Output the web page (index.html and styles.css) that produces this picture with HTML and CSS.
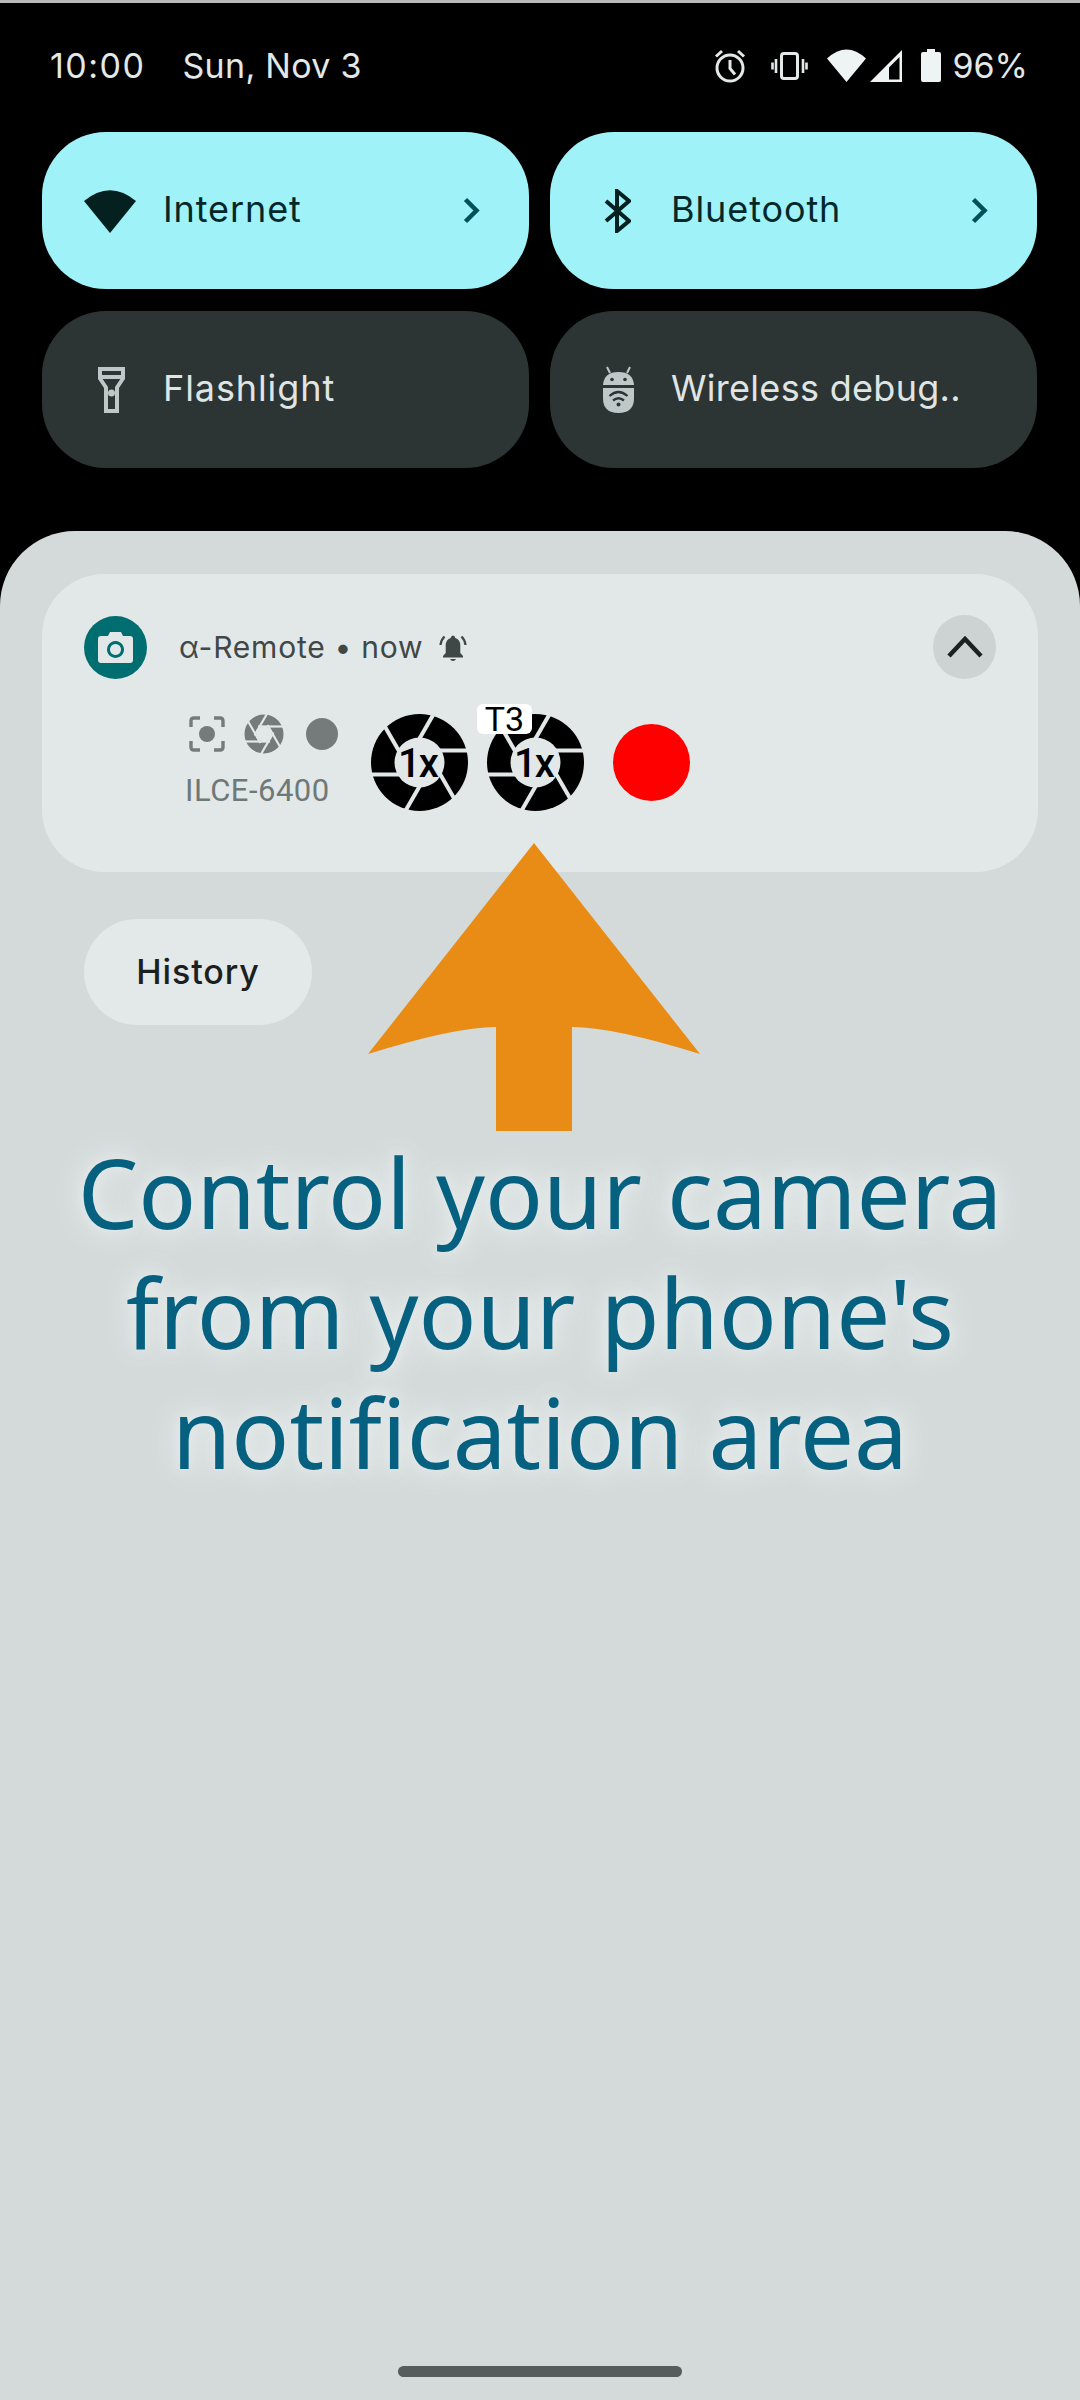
FILE: index.html
```html
<!DOCTYPE html>
<html lang="en">
<head>
  <meta charset="UTF-8" />
  <meta name="viewport" content="width=device-width, initial-scale=1.0"/>
  <title>Notification shade</title>
  <link rel="stylesheet" href="styles.css">
</head>
<body>
  <!-- Status bar -->
  <div class="statusbar">
    <span class="clock">10:00</span>
    <span class="date">Sun, Nov 3</span>
    <svg class="ic-alarm" viewBox="0 0 32 34">
      <circle cx="16" cy="19" r="13" fill="none" stroke="#e3e8e8" stroke-width="3"/>
      <path d="M16 11v8.500l5 6M2 7.500 8 2M30 7.500 24 2" fill="none" stroke="#e3e8e8" stroke-width="3"/>
    </svg>
    <svg class="ic-vibrate" viewBox="0 0 37 28">
      <rect x="10.500" y="1.500" width="16" height="25" rx="2.500" fill="none" stroke="#e3e8e8" stroke-width="3"/>
      <path d="M5 7v14M1.500 10.500v7M32 7v14M35.500 10.500v7" fill="none" stroke="#e3e8e8" stroke-width="2.600"/>
    </svg>
    <svg class="ic-wifi" viewBox="0 0 39 33">
      <path d="M19.500 33 0 9.500Q19.500-8.500 39 9.500Z" fill="#eef3f3"/>
    </svg>
    <svg class="ic-signal" viewBox="0 0 32 32">
      <path fill-rule="evenodd" d="M0 32 32 0V32ZM19 29.500h10.500V7L19 17.500Z" fill="#eef3f3"/>
    </svg>
    <svg class="ic-battery" viewBox="0 0 20 33">
      <path d="M6 0h8v3h4q2 0 2 2v26q0 2-2 2H2q-2 0-2-2V5q0-2 2-2h4Z" fill="#eef3f3"/>
    </svg>
    <span class="battery-text">96%</span>
  </div>

  <!-- Quick tiles -->
  <div class="tiles">
    <div class="tile tile-on">
      <svg class="tile-ic ic-internet" viewBox="0 0 52 45">
        <path d="M26 45 0 13Q26-8.500 52 13Z" fill="#04201f"/>
      </svg>
      <span class="tile-label">Internet</span>
      <svg class="tile-arrow" viewBox="0 0 17 27">
        <path d="M2.500 2.500 13.500 13.500 2.500 24.500" fill="none" stroke="#00505a" stroke-width="4.500"/>
      </svg>
    </div>
    <div class="tile tile-on">
      <svg class="tile-ic ic-bluetooth" viewBox="0 0 27 44">
        <path d="M2 12 25 32 13 42V2L25 12 2 32" fill="none" stroke="#04201f" stroke-width="4"/>
      </svg>
      <span class="tile-label">Bluetooth</span>
      <svg class="tile-arrow" viewBox="0 0 17 27">
        <path d="M2.500 2.500 13.500 13.500 2.500 24.500" fill="none" stroke="#00505a" stroke-width="4.500"/>
      </svg>
    </div>
    <div class="tile">
      <svg class="tile-ic ic-flash" viewBox="0 0 27 46">
        <path d="M2 2h23v9.500l-6 9v23.500h-11v-23.500l-6-9ZM2 10h23" fill="none" stroke="#bfc8c8" stroke-width="4"/>
        <circle cx="13.500" cy="26" r="3.500" fill="#bfc8c8"/>
      </svg>
      <span class="tile-label">Flashlight</span>
    </div>
    <div class="tile">
      <svg class="tile-ic ic-android" viewBox="0 0 31 47">
        <path d="M7 7 4 1M24 7l3-6" stroke="#bfc8c8" stroke-width="2" fill="none"/>
        <path d="M0 19Q1 6 15.500 6T31 19Z" fill="#bfc8c8"/>
        <path d="M0 22H31V32Q31 47 15.500 47T0 32Z" fill="#bfc8c8"/>
        <circle cx="9" cy="13.500" r="1.800" fill="#2d3434"/>
        <circle cx="22" cy="13.500" r="1.800" fill="#2d3434"/>
        <path d="M6.500 30Q15.500 22 24.500 30M10 34.500Q15.500 30 21 34.500" stroke="#2d3434" stroke-width="2.300" fill="none"/>
        <circle cx="15.500" cy="38.500" r="2" fill="#2d3434"/>
      </svg>
      <span class="tile-label tile-label-long">Wireless debug..</span>
    </div>
  </div>

  <!-- Shade -->
  <div class="panel">
    <div class="card">
      <div class="card-head">
        <span class="app-icon">
          <svg viewBox="0 0 35 31">
            <path fill-rule="evenodd" d="M10 4 12 0H23L25 4H32Q35 4 35 7V28Q35 31 32 31H3Q0 31 0 28V7Q0 4 3 4ZM17.500 9a8.500 8.500 0 1 0 .01 0ZM17.500 12a5.500 5.500 0 1 1-.01 0Z" fill="#e2e8e8"/>
          </svg>
        </span>
        <span class="app-name">α-Remote</span>
        <span class="app-dot">•</span>
        <span class="app-time">now</span>
        <svg class="ic-bell" viewBox="0 0 28 27">
          <path d="M14 1.500q2 0 2.300 2.500 4.700 1.500 5 7v8l2.700 3v1.500H4V22l2.700-3v-8q.3-5.500 5-7Q12 1.500 14 1.500ZM11 25h6q-1 2-3 2t-3-2Z" fill="#3f4747"/>
          <path d="M1.500 11Q2 6 5.500 2.500M26.500 11Q26 6 22.500 2.500" stroke="#3f4747" stroke-width="2.300" fill="none"/>
        </svg>
        <span class="expand">
          <svg viewBox="0 0 36 22">
            <path d="M2 20 18 3l16 17" fill="none" stroke="#1b2020" stroke-width="4.500"/>
          </svg>
        </span>
      </div>
      <div class="card-body">
        <div class="camera-info">
          <div class="mini-icons">
            <svg class="ic-focus" viewBox="0 0 36 36">
              <path d="M2 11V5q0-3 3-3h6M25 2h6q3 0 3 3v6M34 25v6q0 3-3 3h-6M11 34H5q-3 0-3-3v-6" fill="none" stroke="#757a7a" stroke-width="3.400"/>
              <circle cx="18" cy="18" r="8" fill="#757a7a"/>
            </svg>
            <svg class="ic-aperture" viewBox="-20 -20 40 40">
              <circle r="19.500" fill="#757a7a"/>
              <g stroke="#e2e8e8" stroke-width="2.200">
                <path d="M-6-7.500H21"/>
                <path d="M-6-7.500H21" transform="rotate(60)"/>
                <path d="M-6-7.500H21" transform="rotate(120)"/>
                <path d="M-6-7.500H21" transform="rotate(180)"/>
                <path d="M-6-7.500H21" transform="rotate(240)"/>
                <path d="M-6-7.500H21" transform="rotate(300)"/>
              </g>
              <path d="M0-8.500 7.400-4.200V4.200L0 8.500-7.400 4.200V-4.200Z" fill="#e2e8e8"/>
            </svg>
            <span class="mini-dot"></span>
          </div>
          <div class="camera-name">ILCE-6400</div>
        </div>
        <div class="shutter">
          <svg viewBox="-48.500 -48.500 97 97">
            <circle r="48.500" fill="#000"/>
            <circle r="25" fill="#e2e8e8"/>
            <g stroke="#e2e8e8" stroke-width="4">
              <path d="M20-12H50"/>
              <path d="M20-12H50" transform="rotate(60)"/>
              <path d="M20-12H50" transform="rotate(120)"/>
              <path d="M20-12H50" transform="rotate(180)"/>
              <path d="M20-12H50" transform="rotate(240)"/>
              <path d="M20-12H50" transform="rotate(300)"/>
            </g>
            <text class="zoom-text" x="-2" y="14" text-anchor="middle">1x</text>
          </svg>
        </div>
        <div class="shutter shutter-timer">
          <svg viewBox="-48.500 -48.500 97 97">
            <circle r="48.500" fill="#000"/>
            <circle r="25" fill="#e2e8e8"/>
            <g stroke="#e2e8e8" stroke-width="4">
              <path d="M20-12H50"/>
              <path d="M20-12H50" transform="rotate(60)"/>
              <path d="M20-12H50" transform="rotate(120)"/>
              <path d="M20-12H50" transform="rotate(180)"/>
              <path d="M20-12H50" transform="rotate(240)"/>
              <path d="M20-12H50" transform="rotate(300)"/>
            </g>
            <text class="zoom-text" x="-2" y="14" text-anchor="middle">1x</text>
          </svg>
          <span class="timer-badge">T3</span>
        </div>
        <span class="record"></span>
      </div>
    </div>

    <div class="history">History</div>

    <h1 class="caption">Control your camera<br>from your phone's<br>notification area</h1>

    <svg class="big-arrow" viewBox="0 0 332 288">
      <path d="M166 0 332 211Q245 184 204 184V288H128V184Q87 184 0 211Z" fill="#e98c15"/>
    </svg>

    <div class="home-bar"></div>
  </div>
</body>
</html>
```

FILE: styles.css
```css
* {
  box-sizing: border-box;
}
body {
  margin: 0;
  width: 1080px;
  height: 2400px;
  overflow: hidden;
  background-color: #000;
  font-family: Inter, Roboto, sans-serif;
  display: flex;
  flex-direction: column;
}
svg {
  display: block;
  flex: none;
}

/* status bar */
.statusbar {
  height: 132px;
  border-top: 3px solid #b9b9b9;
  padding: 0 52px 4px 50px;
  display: flex;
  align-items: center;
  color: #e3e8e8;
  font-size: 34px;
}
.clock {
  letter-spacing: 1.5px;
}
.date {
  margin-left: 37px;
  margin-right: auto;
  letter-spacing: 0.3px;
}
.ic-alarm { width: 32px; height: 34px; }
.ic-vibrate { width: 37px; height: 28px; margin-left: 25px; }
.ic-wifi { width: 39px; height: 33px; margin-left: 19px; }
.ic-signal { width: 32px; height: 32px; margin-left: 4px; }
.ic-battery { width: 20px; height: 33px; margin-left: 19px; }
.battery-text { margin-left: 11px; }

/* tiles */
.tiles {
  display: grid;
  grid-template-columns: 487px 487px;
  grid-auto-rows: 157px;
  gap: 22px 21px;
  padding-left: 42px;
}
.tile {
  border-radius: 64px;
  background-color: #2d3434;
  color: #dfe5e5;
  display: flex;
  align-items: center;
  position: relative;
  padding-left: 42px;
  font-size: 36px;
}
.tile-on {
  background-color: #9ff2f8;
  color: #04282a;
}
.tile-label {
  position: absolute;
  left: 121px;
  top: 55px;
  letter-spacing: 0.9px;
}
.tile-label-long {
  letter-spacing: 0.3px;
}
.tile-arrow {
  width: 17px;
  height: 27px;
  margin-left: auto;
  margin-right: 49px;
}
.ic-internet { width: 52px; height: 45px; }
.ic-bluetooth { width: 27px; height: 44px; margin-left: 12px; }
.ic-flash { width: 27px; height: 46px; margin-left: 14px; }
.ic-android { width: 31px; height: 47px; margin-left: 11px; }

/* shade */
.panel {
  flex: 1;
  margin-top: 63px;
  padding-top: 43px;
  background-color: #d4dada;
  border-radius: 75px 75px 0 0;
  display: flex;
  flex-direction: column;
  position: relative;
}
.card {
  margin: 0 42px;
  height: 298px;
  padding: 41px 42px 0;
  background-color: #e2e8e8;
  border-radius: 62px;
}
.card-head {
  display: flex;
  align-items: center;
  height: 64px;
  color: #3f4747;
  font-size: 30px;
  letter-spacing: 0.8px;
}
.app-icon {
  width: 63px;
  height: 63px;
  border-radius: 50%;
  background-color: #006d70;
  display: flex;
  align-items: center;
  justify-content: center;
  margin-right: 32px;
}
.app-icon svg {
  width: 35px;
  height: 31px;
}
.app-dot {
  margin: 0 9px;
}
.ic-bell {
  width: 28px;
  height: 27px;
  margin-left: 16px;
}
.expand {
  width: 63px;
  height: 64px;
  margin-left: auto;
  border-radius: 50%;
  background-color: #cdd3d3;
  display: flex;
  align-items: center;
  justify-content: center;
}
.expand svg {
  width: 36px;
  height: 22px;
}
.card-body {
  display: flex;
  align-items: center;
  margin-top: 35px;
}
.camera-info {
  align-self: flex-start;
  width: 287px;
  padding-left: 105px;
}
.mini-icons {
  display: flex;
  align-items: center;
  height: 40px;
}
.ic-focus { width: 36px; height: 36px; }
.ic-aperture { width: 40px; height: 40px; margin-left: 19px; }
.mini-dot {
  width: 32px;
  height: 32px;
  margin-left: 22px;
  border-radius: 50%;
  background-color: #757a7a;
}
.camera-name {
  margin-top: 19px;
  margin-left: -4px;
  color: #6f7878;
  font-family: Roboto, sans-serif;
  font-size: 31px;
  letter-spacing: 0.5px;
  line-height: 36px;
  white-space: nowrap;
}
.shutter {
  width: 97px;
  height: 97px;
  flex: none;
}
.shutter-timer {
  margin-left: 19px;
  position: relative;
}
.zoom-text {
  font-family: Roboto, sans-serif;
  font-size: 40px;
  font-weight: 500;
  letter-spacing: -2px;
  fill: #000;
}
.timer-badge {
  position: absolute;
  left: -10px;
  top: -10px;
  width: 55px;
  height: 30px;
  border-radius: 6px;
  background-color: #fff;
  color: #000;
  font-family: Roboto, sans-serif;
  font-size: 34px;
  line-height: 30px;
  text-align: center;
}
.record {
  width: 77px;
  height: 77px;
  margin-left: 29px;
  border-radius: 50%;
  background-color: #f00;
}
.history {
  width: 228px;
  height: 106px;
  margin: 47px 0 0 84px;
  border-radius: 53px;
  background-color: #e3e8e8;
  color: #1b1f1f;
  font-size: 34px;
  font-weight: 500;
  letter-spacing: 0.9px;
  line-height: 106px;
  text-align: center;
}
.caption {
  margin: 107px 0 0;
  color: #066180;
  font-family: "Noto Sans", sans-serif;
  font-size: 96px;
  font-weight: 400;
  line-height: 120px;
  text-align: center;
  text-shadow: 0 0 12px #e6ebeb, 0 0 24px #e6ebeb, 0 0 32px #e6ebeb;
}
.big-arrow {
  position: absolute;
  left: 368px;
  top: 312px;
  width: 332px;
  height: 288px;
}
.home-bar {
  width: 284px;
  height: 11px;
  margin: auto auto 23px;
  border-radius: 6px;
  background-color: #565b5b;
}
```
